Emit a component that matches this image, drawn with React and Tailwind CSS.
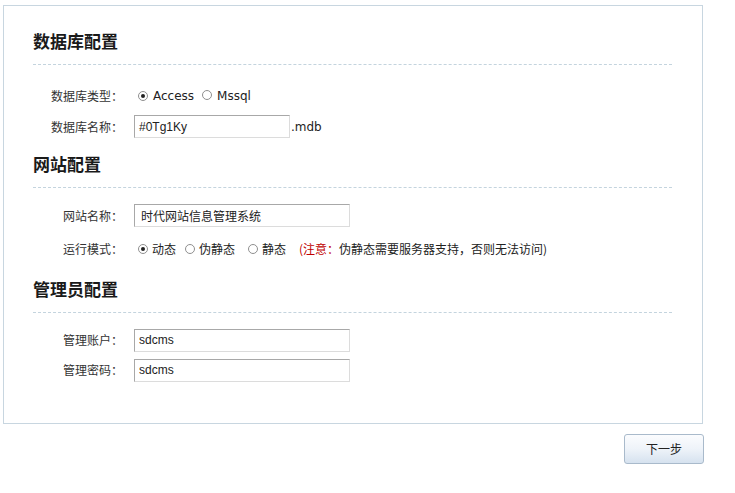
import React from "react";

const cjk = { fontFamily: '"Noto Sans CJK SC", "Noto Sans", sans-serif' };
const latin = { fontFamily: '"DejaVu Sans", "Noto Sans CJK SC", sans-serif' };
const arial = { fontFamily: '"Liberation Sans", Arial, "Noto Sans CJK SC", sans-serif' };

function Radio({ checked }) {
  return (
    <span className="inline-flex w-[10px] h-[10px] shrink-0 items-center justify-center rounded-full border border-[#8f8f8f] bg-white">
      {checked && <span className="block w-[4px] h-[4px] rounded-full bg-[#222]" />}
    </span>
  );
}

function Heading({ children, className = "" }) {
  return (
    <div className={className}>
      <div className="h-[20px] flex items-center text-[17px] font-bold text-[#1a1a1a] leading-none" style={cjk}>
        {children}
      </div>
      <div className="mt-[14px] w-[639px] border-t border-dashed border-[#c4d4de]" />
    </div>
  );
}

function Row({ label, children, h = "h-[31px]" }) {
  return (
    <div className={`flex items-center ${h}`}>
      <div className="w-[90px] text-right text-[12px] text-[#333] leading-none" style={cjk}>
        {label}
      </div>
      <div className="ml-[11px] flex items-center">{children}</div>
    </div>
  );
}

function TextBox({ value, w }) {
  return (
    <div
      className={`${w} h-[23px] flex items-center px-[4px] border border-[#dcdcdc] border-t-[#a8a8a8] border-l-[#a8a8a8] bg-white text-[12px] text-[#222]`}
      style={arial}
    >
      {value}
    </div>
  );
}

export default function App() {
  return (
    <div className="w-[735px] h-[493px] bg-white relative">
      <div className="ml-[3px] pt-[5px]">
        <div className="w-[700px] h-[419px] border border-[#c8d6e0] bg-white pl-[29px] pt-[24px]">
          <Heading>数据库配置</Heading>
          <div className="pt-[15px]">
            <Row label="数据库类型：">
              <div className="flex items-center pl-[4px] text-[12px] text-[#222]" style={latin}>
                <Radio checked />
                <span className="ml-[5px]">Access</span>
                <span className="ml-[8px]"><Radio /></span>
                <span className="ml-[5px]">Mssql</span>
              </div>
            </Row>
            <Row label="数据库名称：">
              <TextBox value="#0Tg1Ky" w="w-[156px]" />
              <span className="ml-[1px] text-[12px] text-[#222]" style={latin}>.mdb</span>
            </Row>
          </div>

          <Heading className="mt-[11px]">网站配置</Heading>
          <div className="pt-[12px]">
            <Row label="网站名称：">
              <div
                className="w-[216px] h-[23px] flex items-center px-[6px] border border-[#dcdcdc] border-t-[#a8a8a8] border-l-[#a8a8a8] bg-white text-[12px] text-[#222]"
                style={cjk}
              >
                时代网站信息管理系统
              </div>
            </Row>
            <Row label="运行模式：" h="h-[36px]">
              <div className="flex items-center pl-[4px] text-[12px] text-[#222]" style={cjk}>
                <Radio checked />
                <span className="ml-[4px]">动态</span>
                <span className="ml-[9px]"><Radio /></span>
                <span className="ml-[4px]">伪静态</span>
                <span className="ml-[13px]"><Radio /></span>
                <span className="ml-[4px]">静态</span>
                <span className="ml-[13px]">
                  <span className="text-[#c00000]">(注意：</span>
                  伪静态需要服务器支持，否则无法访问)
                </span>
              </div>
            </Row>
          </div>

          <Heading className="mt-[11px]">管理员配置</Heading>
          <div className="pt-[12px]">
            <Row label="管理账户：" h="h-[30px]">
              <TextBox value="sdcms" w="w-[216px]" />
            </Row>
            <Row label="管理密码：" h="h-[30px]">
              <TextBox value="sdcms" w="w-[216px]" />
            </Row>
          </div>
        </div>

        <div className="mt-[10px] ml-[621px]">
          <button
            className="w-[80px] h-[30px] rounded-[3px] border border-[#a9bacb] bg-gradient-to-b from-[#fbfcfe] via-[#eef3f9] to-[#d6e2ef] text-[12px] text-[#222] flex items-center justify-center"
            style={cjk}
          >
            下一步
          </button>
        </div>
      </div>
    </div>
  );
}
